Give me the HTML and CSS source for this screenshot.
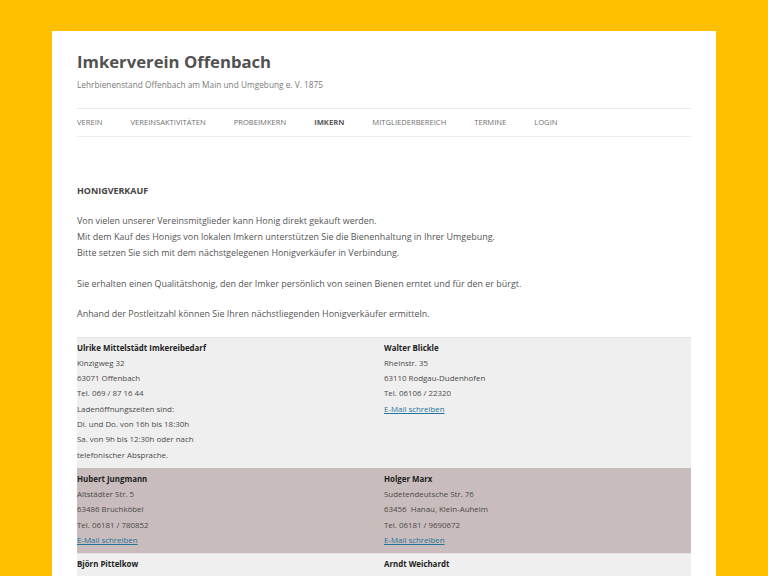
FILE: index.html
```html
<!DOCTYPE html>
<html lang="de">
<head>
  <meta charset="UTF-8">
  <title>Honigverkauf | Imkerverein Offenbach</title>
  <link rel="stylesheet" href="styles.css">
</head>
<body>

<div class="site">
  <header class="site-header">
    <h1 class="site-title">Imkerverein Offenbach</h1>
    <h2 class="site-description">Lehrbienenstand Offenbach am Main und Umgebung e. V. 1875</h2>
    <nav class="main-nav">
      <a href="#">Verein</a>
      <a href="#">Vereinsaktivitäten</a>
      <a href="#">Probeimkern</a>
      <a href="#" class="current">Imkern</a>
      <a href="#">Mitgliederbereich</a>
      <a href="#">Termine</a>
      <a href="#">Login</a>
    </nav>
  </header>

  <main class="entry">
    <p><strong>HONIGVERKAUF</strong></p>
    <p>Von vielen unserer Vereinsmitglieder kann Honig direkt gekauft werden.<br>
    Mit dem Kauf des Honigs von lokalen Imkern unterstützen Sie die Bienenhaltung in Ihrer Umgebung.<br>
    Bitte setzen Sie sich mit dem nächstgelegenen Honigverkäufer in Verbindung.</p>
    <p>Sie erhalten einen Qualitätshonig, den der Imker persönlich von seinen Bienen erntet und für den er bürgt.</p>
    <p>Anhand der Postleitzahl können Sie Ihren nächstliegenden Honigverkäufer ermitteln.</p>

    <table class="sellers">
      <tr>
        <td>
          <strong>Ulrike Mittelstädt Imkereibedarf</strong><br>
          Kinzigweg 32<br>
          63071 Offenbach<br>
          Tel. 069 / 87 16 44<br>
          Ladenöffnungszeiten sind:<br>
          Di. und Do. von 16h bis 18:30h<br>
          Sa. von 9h bis 12:30h oder nach<br>
          telefonischer Absprache.
        </td>
        <td>
          <strong>Walter Blickle</strong><br>
          Rheinstr. 35<br>
          63110 Rodgau-Dudenhofen<br>
          Tel. 06106 / 22320<br>
          <a href="#">E-Mail schreiben</a>
        </td>
      </tr>
      <tr class="alt">
        <td>
          <strong>Hubert Jungmann</strong><br>
          Altstädter Str. 5<br>
          63486 Bruchköbel<br>
          Tel. 06181 / 780852<br>
          <a href="#">E-Mail schreiben</a>
        </td>
        <td>
          <strong>Holger Marx</strong><br>
          Sudetendeutsche Str. 76<br>
          63456&nbsp; Hanau, Klein-Auheim<br>
          Tel. 06181 / 9690672<br>
          <a href="#">E-Mail schreiben</a>
        </td>
      </tr>
      <tr>
        <td>
          <strong>Björn Pittelkow</strong><br>
          Am Eichwald 12<br>
          63179 Obertshausen<br>
          Tel. 06104 / 41523<br>
          <a href="#">E-Mail schreiben</a>
        </td>
        <td>
          <strong>Arndt Weichardt</strong><br>
          Waldstr. 8<br>
          63128 Dietzenbach<br>
          Tel. 06074 / 27415<br>
          <a href="#">E-Mail schreiben</a>
        </td>
      </tr>
    </table>
  </main>
</div>

</body>
</html>
```

FILE: styles.css
```css
* {margin:0;padding:0;box-sizing:border-box;}
body {
  background: #ffc000;
  font-family: "Open Sans", "DejaVu Sans", sans-serif;
  color: #444;
  padding-top: 31px;
}
.site {
  width: 664px;
  margin-left: 52px;
  background: #fff;
  padding: 0 25px 40px;
}
.site-header {
  padding-top: 18px;
}
.site-title {
  font-size: 16.7px;
  font-weight: bold;
  line-height: 26px;
  color: #515151;
}
.site-description {
  font-size: 8.3px;
  font-weight: normal;
  color: #7a7a7a;
  line-height: 14px;
  margin-top: 3px;
}
.main-nav {
  margin-top: 16px;
  border-top: 1px solid #ededed;
  border-bottom: 1px solid #ededed;
  height: 29px;
  padding-bottom: 2px;
  display: flex;
  align-items: center;
  gap: 28px;
}
.main-nav a {
  font-size: 7.6px;
  text-transform: uppercase;
  text-decoration: none;
  color: #6f6f6f;
}
.main-nav a.current {
  font-weight: bold;
  color: #5a5a5a;
}

.entry {
  padding-top: 46px;
  font-size: 8.95px;
  line-height: 16px;
  color: #555;
}
.entry p {
  margin-bottom: 14.5px;
}
.entry p:first-child {
  margin-bottom: 14px;
}
.entry p strong {
  color: #444;
}

.sellers {
  width: 100%;
  border-collapse: collapse;
  font-size: 7.9px;
  line-height: 15.3px;
  margin-top: 8px;
}
.sellers td {
  width: 50%;
  vertical-align: top;
  padding: 3px 0 5px;
  background: #efefef;
  border-top: 1px solid #e2e2e2;
  color: #4a4a4a;
}
.sellers strong {
  color: #222;
}
.sellers tr.alt td {
  background: #c9bcbc;
  border-top-color: #c9b8b8;
}
.sellers a {
  color: #21759b;
}
```
